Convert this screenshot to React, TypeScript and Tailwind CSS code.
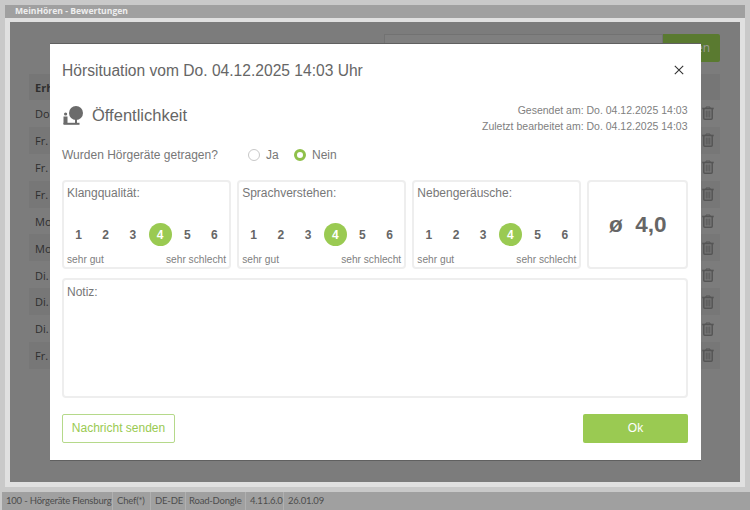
import React from "react";

const rows = ["Do", "Fr.", "Fr.", "Fr.", "Mo", "Mo", "Di.", "Di.", "Di.", "Fr."];

function Trash() {
  return (
    <svg width="12" height="14" viewBox="0 0 12 14" fill="none" stroke="#555555">
      <path d="M0.3 2.5h11.4" strokeWidth="1.6" />
      <path d="M4 2V1h4v1" strokeWidth="1" />
      <path d="M1.8 3v9.2q0 1 1 1h6.4q1 0 1-1V3" strokeWidth="1.5" />
      <path d="M4.2 4.5v7M6 4.5v7M7.8 4.5v7" strokeWidth="1" />
    </svg>
  );
}

function Rating({ label }: { label: string }) {
  return (
    <div className="w-[169px] h-[89px] rounded-[4px] border-2 border-[#eeeeee] px-[3px] flex flex-col">
      <div className="text-[12px] leading-[14px] mt-[4px] text-[#777777]">{label}</div>
      <div className="flex items-center justify-between mt-[23px] h-[23px]">
        {[1, 2, 3, 4, 5, 6].map((n) => (
          <div
            key={n}
            className={
              n === 4
                ? "w-[23px] h-[23px] rounded-full bg-[#9aca52] text-white font-bold text-[12px] flex items-center justify-center"
                : "w-[23px] h-[23px] text-[#666666] font-bold text-[12px] flex items-center justify-center"
            }
          >
            {n}
          </div>
        ))}
      </div>
      <div className="flex justify-between text-[10.2px] leading-[12px] mt-[8px] text-[#808080]">
        <span>sehr gut</span>
        <span>sehr schlecht</span>
      </div>
    </div>
  );
}

export default function App() {
  return (
    <div className="relative w-[750px] h-[510px] overflow-hidden flex flex-col bg-[#c9c9c9] font-['Liberation_Sans',sans-serif]">
      <div className="mt-[5px] mx-[5px] h-[13px] bg-[#a0a0a0] pl-[10px] text-[8.6px] leading-[13px] font-bold text-[#eeeeee] font-['Open_Sans',sans-serif] shrink-0">
        MeinHören - Bewertungen
      </div>
      <div className="mx-[5px] h-[469px] bg-[#e0e0e0] pt-[4px] px-[5px] pb-[5px] shrink-0 flex flex-col">
        <div className="w-[730px] h-[460px] bg-[#7c7c7c] pt-[12px] pl-[19px] pr-[20px] flex flex-col font-['Open_Sans',sans-serif]">
          <div className="flex justify-end h-[28px] shrink-0">
            <div className="w-[279px] h-[28px] border border-[#727272] bg-[#7f7f7f]" />
            <div className="w-[57px] h-[28px] rounded-r-[2px] bg-[#5a7a30] text-[#9a9a9a] text-[12px] leading-[28px] text-right pr-[10px]">
              en
            </div>
          </div>
          <div className="mt-[12px] h-[26px] shrink-0 bg-[#767676] text-[#2e2e2e] text-[11px] font-bold leading-[28px] pl-[6px]">
            Erh
          </div>
          {rows.map((r, i) => (
            <div
              key={i}
              className={`h-[26.9px] shrink-0 flex items-center justify-between pl-[6px] pr-[6px] text-[11px] text-[#2e2e2e] ${i % 2 === 1 ? "bg-[#777777]" : ""}`}
            >
              <span className="pt-[2px]">{r}</span>
              <Trash />
            </div>
          ))}
        </div>
      </div>
      <div className="flex-1 mt-[5px] ml-[2px] bg-[#a0a0a0] flex items-center text-[9.5px] tracking-[-0.2px] text-[#4d4d4d] whitespace-nowrap font-['Lato',sans-serif]">
        <span className="w-[111px] pl-[4px] h-full flex items-center border-r border-[#b0b0b0]">100 - Hörgeräte Flensburg</span>
        <span className="w-[38px] pl-[4px] h-full flex items-center border-r border-[#b0b0b0]">Chef(*)</span>
        <span className="w-[35px] pl-[4px] h-full flex items-center border-r border-[#b0b0b0]">DE-DE</span>
        <span className="w-[60px] pl-[3px] h-full flex items-center border-r border-[#b0b0b0]">Road-Dongle</span>
        <span className="w-[38px] pl-[4px] h-full flex items-center border-r border-[#b0b0b0]">4.11.6.0</span>
        <span className="pl-[4px]">26.01.09</span>
      </div>

      <div className="absolute left-[50px] top-[43px] w-[650.5px] h-[418px] bg-white px-[12px] flex flex-col border-t border-b border-[#606060]">
        <div className="flex items-center justify-between h-[54px] shrink-0">
          <div className="text-[15.6px] text-[#666666]">Hörsituation vom Do. 04.12.2025 14:03 Uhr</div>
          <svg width="10" height="10" viewBox="0 0 10 10" className="mr-[5px] -mt-[2px]" stroke="#333333" strokeWidth="1.1">
            <path d="M0.8 0.8l8.4 8.4M9.2 0.8l-8.4 8.4" />
          </svg>
        </div>
        <div className="flex justify-between mt-[3px] h-[40px] shrink-0">
          <div className="flex items-center gap-[9px] h-[30px] -mt-[1px]">
            <svg width="21" height="20" viewBox="0 0 21 20" fill="#6b6b6b">
              <circle cx="14" cy="8" r="7" />
              <rect x="13" y="14" width="2" height="5" />
              <rect x="1.5" y="17.8" width="16" height="2" />
              <circle cx="3.6" cy="9" r="1.6" />
              <rect x="1.5" y="11.5" width="4" height="7.5" />
            </svg>
            <span className="text-[16.5px] text-[#666666]">Öffentlichkeit</span>
          </div>
          <div className="text-right text-[10.5px] leading-[16px] text-[#808080] mt-[1px] pr-[1px]">
            <div>Gesendet am: Do. 04.12.2025 14:03</div>
            <div>Zuletzt bearbeitet am: Do. 04.12.2025 14:03</div>
          </div>
        </div>
        <div className="flex items-center mt-[4px] h-[20px] shrink-0 text-[12px] text-[#777777]">
          <span className="w-[186px]">Wurden Hörgeräte getragen?</span>
          <span className="w-[12px] h-[12px] rounded-full border border-[#c8c8c8]" />
          <span className="ml-[6px] w-[28px]">Ja</span>
          <span className="w-[12px] h-[12px] rounded-full border-[3px] border-[#8fc04a] bg-white" />
          <span className="ml-[6px]">Nein</span>
        </div>
        <div className="flex justify-between w-[626px] mt-[15px] shrink-0">
          <Rating label="Klangqualität:" />
          <Rating label="Sprachverstehen:" />
          <Rating label="Nebengeräusche:" />
          <div className="w-[100.5px] h-[89px] rounded-[4px] border-2 border-[#eeeeee] flex items-center justify-center text-[22.5px] font-bold text-[#666666] whitespace-pre">
            ø  4,0
          </div>
        </div>
        <div className="mt-[9px] w-[626px] h-[120px] shrink-0 rounded-[4px] border-2 border-[#eeeeee] px-[3px] pt-[5px] text-[12px] leading-[14px] text-[#777777]">
          Notiz:
        </div>
        <div className="flex justify-between mt-[16px] w-[626px] shrink-0">
          <div className="w-[113px] h-[29px] rounded-[2px] border border-[#b5d98a] flex items-center justify-center pb-[1px] text-[12px] text-[#9aca52]">
            Nachricht senden
          </div>
          <div className="w-[105px] h-[29px] rounded-[2px] bg-[#9aca52] flex items-center justify-center pb-[1px] text-[12px] text-white">
            Ok
          </div>
        </div>
      </div>
    </div>
  );
}
